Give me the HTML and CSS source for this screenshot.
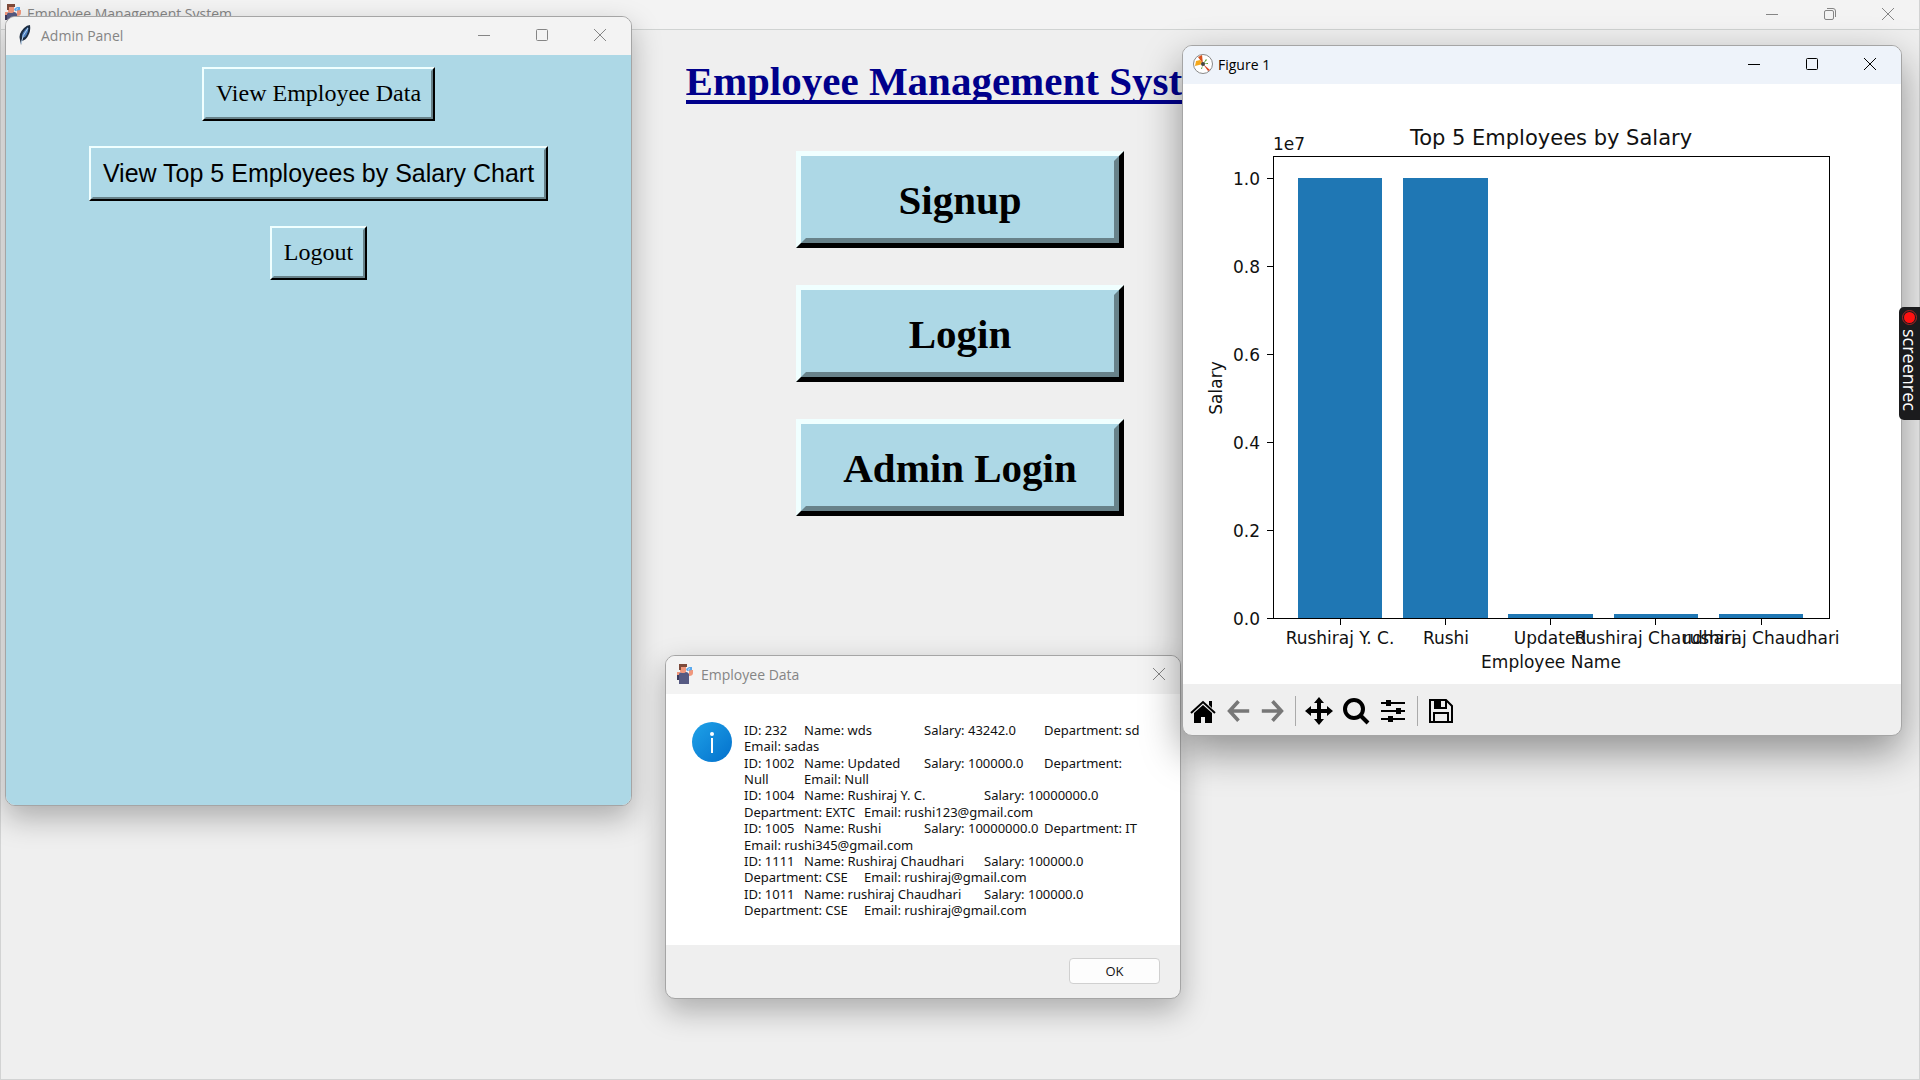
FILE: index.html
```html
<!DOCTYPE html>
<html lang="en">
<head>
<meta charset="utf-8">
<title>Employee Management System</title>
<link rel="stylesheet" href="styles.css">
</head>
<body>
<svg class="defs" aria-hidden="true">
  <symbol id="person" viewBox="0 0 18 20">
    <path fill="#f0977c" d="M1 8h3v4H1z"/>
    <path fill="#3d3a5c" d="M1 11h3v5H1z"/>
    <path fill="#565a82" d="M3 10q1-2 3-2h4q2 0 3 2v10H3z"/>
    <path fill="#f0977c" d="M4 2h6v5q0 2-3 2T4 7zM13 6h4v3q0 3-4 3z"/>
    <path fill="#7d4a3a" d="M3 0h8v3H5v3H3z"/>
    <path fill="#5aa9ee" d="M10 5l3-2h3v3l-5 1z"/>
    <path fill="#b8dcf8" d="M12 5l2-1v1l-2 1z"/>
  </symbol>
  <symbol id="min" viewBox="0 0 14 14"><path d="M1 7.500h12"/></symbol>
  <symbol id="max" viewBox="0 0 14 14"><rect x="1.500" y="1.500" width="11" height="11" rx="1"/></symbol>
  <symbol id="restore" viewBox="0 0 14 14"><rect x="1.500" y="3.500" width="9" height="9" rx="1.500"/><path d="M4 1.500h6q2.500 0 2.500 2.500v6"/></symbol>
  <symbol id="close" viewBox="0 0 14 14"><path d="M1 1l12 12M13 1L1 13"/></symbol>
</svg>

<div class="desktop">
  <header class="titlebar titlebar-main">
    <svg class="app-icon"><use href="#person"/></svg>
    <span class="caption">Employee Management System</span>
    <div class="controls">
      <button aria-label="Minimize"><svg><use href="#min"/></svg></button>
      <button aria-label="Restore"><svg><use href="#restore"/></svg></button>
      <button aria-label="Close"><svg><use href="#close"/></svg></button>
    </div>
  </header>
  <main class="home">
    <h1>Employee Management System</h1>
    <button class="tk big"><span>Signup</span></button>
    <button class="tk big"><span>Login</span></button>
    <button class="tk big"><span>Admin Login</span></button>
  </main>
</div>

<section class="window admin">
  <header class="titlebar">
    <svg class="app-icon" viewBox="0 0 18 20">
      <path fill="#1b2b40" d="M5 20L4 15Q2 9 8 3q3-3 6-3 1 6-2 11-2 4-6 5z"/>
      <path fill="#4b7fc0" d="M6 13Q5 8 12 2q1 5-3 10z"/>
      <path stroke="#b9d4ee" fill="none" d="M5 19Q6 10 12 3"/>
    </svg>
    <span class="caption">Admin Panel</span>
    <div class="controls">
      <button aria-label="Minimize"><svg><use href="#min"/></svg></button>
      <button aria-label="Maximize"><svg><use href="#max"/></svg></button>
      <button aria-label="Close"><svg><use href="#close"/></svg></button>
    </div>
  </header>
  <div class="admin-body">
    <button class="tk"><span>View Employee Data</span></button>
    <button class="tk sans"><span>View Top 5 Employees by Salary Chart</span></button>
    <button class="tk"><span>Logout</span></button>
  </div>
</section>

<section class="window dialog">
  <header class="titlebar">
    <svg class="app-icon"><use href="#person"/></svg>
    <span class="caption">Employee Data</span>
    <div class="controls">
      <button aria-label="Close"><svg><use href="#close"/></svg></button>
    </div>
  </header>
  <div class="message">
    <svg class="info" viewBox="0 0 40 40">
      <defs><linearGradient id="blue" x1="0" y1="0" x2="1" y2="1"><stop offset="0" stop-color="#1fa2e8"/><stop offset="1" stop-color="#0370cc"/></linearGradient></defs>
      <circle cx="20" cy="20" r="20" fill="url(#blue)"/>
      <circle cx="20" cy="12" r="2" fill="#fff"/>
      <path d="M20 16v15" stroke="#fff" stroke-width="2"/>
    </svg>
    <div class="lines">
      <p>ID: 232	Name: wds	Salary: 43242.0	Department: sd</p>
      <p>Email: sadas</p>
      <p>ID: 1002	Name: Updated	Salary: 100000.0	Department:</p>
      <p>Null	Email: Null</p>
      <p>ID: 1004	Name: Rushiraj Y. C.	Salary: 10000000.0</p>
      <p>Department: EXTC	Email: rushi123@gmail.com</p>
      <p>ID: 1005	Name: Rushi	Salary: 10000000.0	Department: IT</p>
      <p>Email: rushi345@gmail.com</p>
      <p>ID: 1111	Name: Rushiraj Chaudhari	Salary: 100000.0</p>
      <p>Department: CSE	Email: rushiraj@gmail.com</p>
      <p>ID: 1011	Name: rushiraj Chaudhari	Salary: 100000.0</p>
      <p>Department: CSE	Email: rushiraj@gmail.com</p>
    </div>
  </div>
  <footer><button class="ok">OK</button></footer>
</section>

<section class="window figure">
  <header class="titlebar">
    <svg class="app-icon" viewBox="0 0 20 20">
      <circle cx="10" cy="10" r="9.500" fill="#fff" stroke="#888"/>
      <path fill="#d9531e" d="M10 10L5 3l4-2z"/>
      <path fill="#f5a81c" d="M10 10l-8 2 1-5 4-1z"/>
      <path fill="#5aa02c" d="M10 10l3-5 1 1zM10 10l-1 5H8zM10 10l5-1v1z"/>
      <path fill="#d9431e" d="M10 10l7 6-2 1z"/>
      <circle cx="10" cy="10" r="2" fill="#444"/>
    </svg>
    <span class="caption">Figure 1</span>
    <div class="controls">
      <button aria-label="Minimize"><svg><use href="#min"/></svg></button>
      <button aria-label="Maximize"><svg><use href="#max"/></svg></button>
      <button aria-label="Close"><svg><use href="#close"/></svg></button>
    </div>
  </header>
  <svg class="chart" viewBox="0 0 718 600">
    <g fill="#1f77b4">
      <rect x="115" y="94" width="84" height="441"/>
      <rect x="220" y="94" width="85" height="441"/>
      <rect x="325" y="530" width="85" height="5"/>
      <rect x="431" y="530" width="84" height="5"/>
      <rect x="536" y="530" width="84" height="5"/>
    </g>
    <g class="axis">
      <rect x="90.500" y="72.500" width="556" height="462"/>
      <path d="M84 94.500h6M84 182.500h6M84 270.500h6M84 358.500h6M84 446.500h6M84 534.500h6"/>
      <path d="M157.500 535v6M262.500 535v6M367.500 535v6M472.500 535v6M578.500 535v6"/>
    </g>
    <g text-anchor="end">
      <text x="77" y="101">1.0</text>
      <text x="77" y="189">0.8</text>
      <text x="77" y="277">0.6</text>
      <text x="77" y="365">0.4</text>
      <text x="77" y="453">0.2</text>
      <text x="77" y="541">0.0</text>
    </g>
    <text x="90" y="66">1e7</text>
    <g text-anchor="middle">
      <text class="chart-title" x="368" y="61">Top 5 Employees by Salary</text>
      <text x="157" y="560">Rushiraj Y. C.</text>
      <text x="263" y="560">Rushi</text>
      <text x="367" y="560">Updated</text>
      <text x="472" y="560">Rushiraj Chaudhari</text>
      <text x="578" y="560">rushiraj Chaudhari</text>
      <text x="368" y="584">Employee Name</text>
      <text transform="translate(39 304) rotate(-90)">Salary</text>
    </g>
  </svg>
  <div class="toolbar">
    <button aria-label="Home"><svg viewBox="0 0 28 28"><path d="M5 16l9-8 9 8v10h-7v-6h-4v6H5z"/><path d="M2 16L14 5l12 11" fill="none" stroke="#000" stroke-width="2"/><path d="M20 4h3v7l-3-3z"/></svg></button>
    <button class="dim" aria-label="Back"><svg viewBox="0 0 28 28"><path d="M14 3L4 14l10 11M4 14h22"/></svg></button>
    <button class="dim" aria-label="Forward"><svg viewBox="0 0 28 28"><path d="M14 3l10 11-10 11M24 14H2"/></svg></button>
    <i class="sep"></i>
    <button aria-label="Pan"><svg viewBox="0 0 28 28"><path d="M14 0l5 6h-3v6h6V9l6 5-6 5v-3h-6v6h3l-5 6-5-6h3v-6H6v3l-6-5 6-5v3h6V6H9z"/></svg></button>
    <button aria-label="Zoom"><svg viewBox="0 0 28 28"><circle cx="12" cy="12" r="9" fill="none" stroke="#000" stroke-width="4"/><path d="M18 18l8 8" stroke="#000" stroke-width="4"/></svg></button>
    <button aria-label="Configure subplots"><svg viewBox="0 0 28 28"><path d="M2 5h24v2H2zM2 13h24v2H2zM2 21h24v2H2zM7 3h5v6H7zM17 11h5v6h-5zM9 19h5v6H9z"/></svg></button>
    <i class="sep"></i>
    <button aria-label="Save"><svg viewBox="0 0 28 28"><path d="M3 3h16l6 6v16H3zM8 4v7h11V4M7 25v-9h14v9" fill="none" stroke="#000" stroke-width="2"/><path d="M8 4h6v7H8z"/></svg></button>
  </div>
</section>

<aside class="recorder"><i></i>screenrec</aside>
</body>
</html>
```

FILE: styles.css
```css
* { box-sizing: border-box; }

body {
  margin: 0;
  min-height: 100vh;
  overflow: hidden;
  background: #efefef;
  font: 14px "Open Sans", "Noto Sans", sans-serif;
  color: #111;
}

button { font: inherit; color: inherit; margin: 0; padding: 0; border: 0; background: none; }
p { margin: 0; }
.defs { position: absolute; width: 0; height: 0; }

/* Window frames */
.desktop { min-height: 100vh; border: 1px solid #d2d3d3; border-top: 0; }

.window {
  position: absolute;
  display: flex;
  flex-direction: column;
  overflow: hidden;
  border: 1px solid #a5a5a5;
  border-radius: 10px;
  background: #efefef;
  box-shadow: 0 12px 30px rgba(0, 0, 0, .28);
}

.titlebar {
  display: flex;
  align-items: center;
  flex: none;
  height: 38px;
  padding: 0 2px 2px 10px;
  background: #f3f3f3;
  color: #858585;
}
.app-icon { width: 18px; height: 20px; margin-right: 7px; flex: none; }
.caption { flex: 1; white-space: nowrap; }
.controls { display: flex; }
.controls button { width: 58px; height: 28px; display: grid; place-items: center; }
.controls svg { width: 14px; height: 14px; fill: none; stroke: currentColor; }

.titlebar-main { height: 30px; padding-left: 3px; border-bottom: 1px solid #d0d3d2; }
.titlebar-main .app-icon { margin-right: 5px; }

/* Raised buttons */
.tk {
  flex: none;
  border: 2px solid #000;
  border-top-color: #f0ffff;
  border-left-color: #f0ffff;
  background: #add8e6;
  color: #000;
  font: 24px/27px "Liberation Serif", serif;
}
.tk span {
  display: grid;
  place-items: center;
  height: 50px;
  padding: 0 10px 2px;
  border: 2px solid #68828a;
  border-top-color: #add8e6;
  border-left-color: #add8e6;
}
.tk.sans { font: 25px/29px "Liberation Sans", sans-serif; }
.tk.sans span { height: 51px; padding-bottom: 0; }
.tk.big { width: 328px; border-width: 5px; font-size: 41px; font-weight: bold; line-height: 46px; }
.tk.big span { height: 87px; padding-bottom: 0; border-width: 5px; }

/* Main window */
.home { display: flex; flex-direction: column; align-items: center; gap: 37px; padding-top: 28px; }
.home h1 {
  height: 46px;
  margin: 0 0 10px;
  overflow: hidden;
  border-bottom: 4px solid #00008b;
  color: #00008b;
  font: bold 41px/46px "Liberation Serif", serif;
}

/* Admin panel */
.admin { left: 5px; top: 16px; width: 627px; height: 790px; }
.admin-body {
  flex: 1;
  display: flex;
  flex-direction: column;
  align-items: center;
  gap: 25px;
  padding-top: 12px;
  background: #add8e6;
}

/* Message box */
.dialog { left: 665px; top: 655px; width: 516px; }
.dialog .titlebar { padding-right: 0; }
.dialog .controls button { width: 42px; }
.message {
  display: flex;
  gap: 12px;
  padding: 28px 0 27px 26px;
  background: #fff;
}
.info { width: 40px; height: 40px; flex: none; }
.lines {
  display: flex;
  flex-direction: column;
  justify-content: space-between;
  height: 196px;
  font: 13px/16px "Noto Sans", sans-serif;
  white-space: pre;
  tab-size: 60px;
}
.dialog footer { display: flex; justify-content: flex-end; padding: 13px 20px 14px; }
.ok {
  width: 91px;
  height: 26px;
  border: 1px solid #d0d0d0;
  border-radius: 4px;
  background: #fdfdfd;
  font-size: 13px;
}

/* Figure window */
.figure {
  left: 1182px;
  top: 45px;
  width: 720px;
  box-shadow: 0 16px 40px rgba(0, 0, 0, .4);
}
.figure .titlebar { background: #eef3fa; color: #000; }
.figure .app-icon { width: 20px; height: 20px; margin-right: 5px; }
.chart { display: block; width: 100%; background: #fff; font: 17px "DejaVu Sans", sans-serif; }
.chart text { fill: #111; }
.chart .chart-title { font-size: 21px; }
.axis { fill: none; stroke: #000; stroke-width: 1; }
.toolbar { display: flex; align-items: center; gap: 9px; height: 51px; padding: 2px 6px 0; }
.toolbar button, .toolbar svg { display: block; width: 28px; height: 28px; }
.toolbar .dim, .toolbar .dim svg { width: 25px; }
.toolbar .dim svg { fill: none; stroke: #777; stroke-width: 4; }
.sep { width: 1px; height: 30px; margin-left: 1px; background: #aaa; }

/* Recorder tab */
.recorder {
  position: absolute;
  right: 0;
  top: 307px;
  display: flex;
  align-items: center;
  gap: 6px;
  width: 21px;
  height: 113px;
  padding: 5px 0;
  border-radius: 5px 0 0 5px;
  background: #1b1b1d;
  color: #fff;
  font-size: 18px;
  line-height: 18px;
  writing-mode: vertical-rl;
}
.recorder i { width: 11px; height: 11px; border-radius: 50%; background: #f11; outline: 1px solid #a22; outline-offset: 1px; }
```
